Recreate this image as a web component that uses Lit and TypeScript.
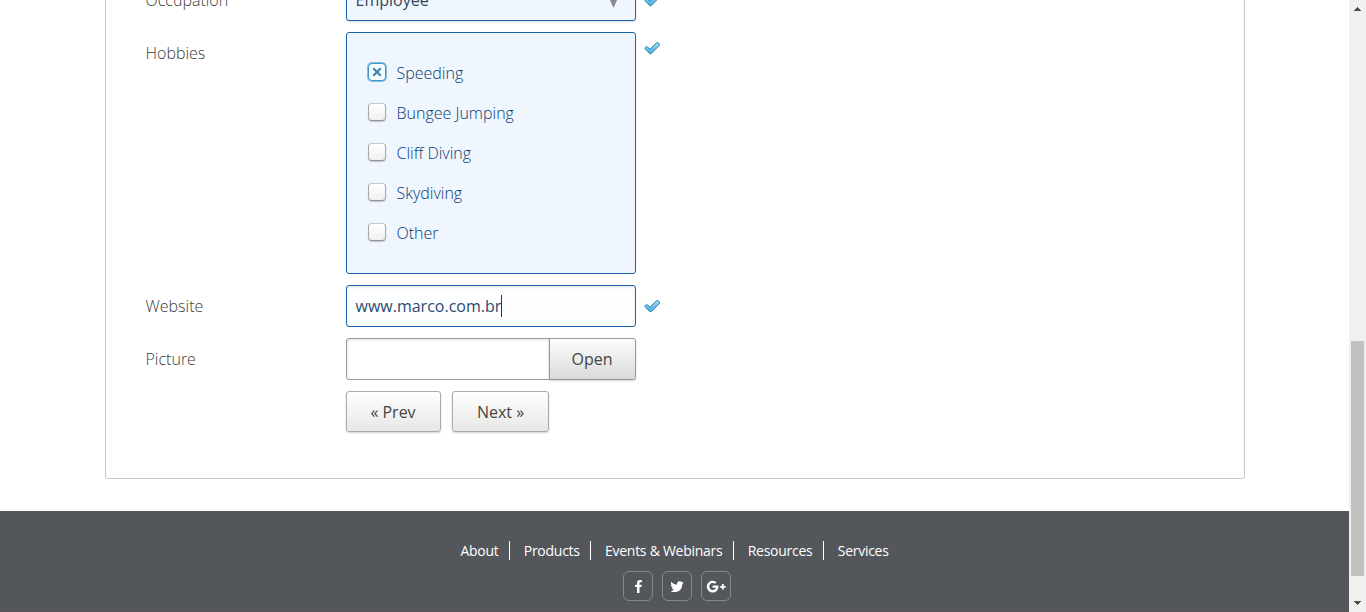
import { LitElement, html, css, svg } from "lit";
import { customElement } from "lit/decorators.js";
import { classMap } from "lit/directives/class-map.js";

@customElement("valid-mark")
class ValidMark extends LitElement {
  static styles = css`
    :host { display: block; width: 16px; height: 13px; }
    svg { display: block; }
  `;
  render() {
    return html`<svg width="16" height="13" viewBox="0 0 16 13">
      <defs>
        <linearGradient id="g" x1="0" y1="0" x2="0" y2="1">
          <stop offset="0" stop-color="#a0d9f5" />
          <stop offset="1" stop-color="#48aee0" />
        </linearGradient>
      </defs>
      <path d="M0.7 6.300 L2.600 4.300 L6 7.200 L12.600 0.600 L14 0.600 L15.400 2 L15.400 3.400 L7.300 11.600 L5.600 11.600 Z"
        fill="url(#g)" stroke="#3184b0" stroke-width="1" stroke-linejoin="round" />
    </svg>`;
  }
}

@customElement("check-item")
class CheckItem extends LitElement {
  static properties = { label: {}, checked: { type: Boolean } };
  declare label: string;
  declare checked: boolean;
  static styles = css`
    :host { display: flex; align-items: center; height: 40px; }
    .box {
      box-sizing: border-box; width: 18px; height: 18px; margin: -2px 10.5px 0 1px;
      border: 1px solid #a6a6a6; border-top-color: #c8c8c8; border-bottom-color: #949494;
      border-radius: 4px; background: linear-gradient(#fff, #f0f0f0);
      box-shadow: 0 1px 1px rgba(0, 0, 0, 0.2);
    }
    .box.on {
      border-color: #3a9acb; background: #f7fbfe;
      box-shadow: 0 0 0 1px rgba(58, 154, 203, 0.6);
    }
    svg { display: block; }
  `;
  render() {
    return html`<span class=${classMap({ box: true, on: this.checked })}>
        ${this.checked
          ? html`<svg width="16" height="16" viewBox="0 0 16 16">
              <path d="M4.300 4.300 L11.700 11.700 M11.700 4.300 L4.300 11.700" stroke="#3d87ad" stroke-width="2.300" />
            </svg>`
          : ""}</span
      ><span>${this.label}</span>`;
  }
}

const HOBBIES = ["Speeding", "Bungee Jumping", "Cliff Diving", "Skydiving", "Other"];
const LINKS = ["About", "Products", "Events & Webinars", "Resources", "Services"];

const FACEBOOK = svg`<path d="M17.6 21.6v-5.8h2l.3-2.3h-2.3v-1.4c0-.7.2-1.1 1.1-1.1h1.3V8.9c-.3 0-1-.1-1.8-.1-1.900 0-3.100 1.100-3.100 3.100v1.600h-2v2.300h2v5.800z" transform="translate(-1.1 .3)" />`;
const TWITTER = svg`<path d="M21.5 11.2c-.5.2-1 .4-1.6.4.6-.3 1-.9 1.2-1.5-.5.3-1.1.5-1.7.7a2.75 2.75 0 0 0-4.7 2.5c-2.300-.1-4.300-1.200-5.700-2.900-.7 1.200-.4 2.800.8 3.700-.4 0-.9-.1-1.200-.3 0 1.300.9 2.500 2.200 2.800-.4.1-.8.1-1.200 0 .3 1.100 1.400 1.900 2.600 1.900-1.200.9-2.600 1.300-4.100 1.100 5.500 3.200 11.900-.3 11.900-6.400v-.5c.6-.4 1.100-.9 1.500-1.500z" transform="translate(.3 .3)" />`;
const GOOGLE = svg`<path d="M12 14.3v2.2h3.300c-.3 1.300-1.300 2.200-3.200 2.200a3.500 3.500 0 1 1 2.300-6.200l1.600-1.600a5.900 5.900 0 1 0 1.900 3.400z" transform="translate(-.4 .3)" /><path d="M20.600 13.100h1.900v1.800h1.800v1.900h-1.800v1.800h-1.900v-1.800h-1.700v-1.900h1.700z" transform="translate(.3 0)" />`;

@customElement("app-root")
class AppRoot extends LitElement {
  static styles = css`
    :host {
      display: flex; height: 612px; overflow: hidden; background: #fff;
      font: 300 16px/22px "Open Sans", "Noto Sans", sans-serif; color: #444;
    }
    .page { flex: 1; display: flex; flex-direction: column; min-width: 0; }
    .panel {
      box-sizing: border-box; width: 1140px; height: 479px; flex: none; margin-left: 105px;
      border: 1px solid #c8c8c8; border-top: 0; border-radius: 0 0 3px 3px;
      padding-left: 40px; overflow: hidden;
    }
    .form { display: flex; flex-direction: column; gap: 11px; margin-top: -21px; }
    .row { display: flex; align-items: flex-start; }
    .label { width: 200px; padding-top: 10px; text-indent: -0.5px; color: #3c3c3c; }
    .field {
      box-sizing: border-box; width: 290px; height: 42px; padding: 0 9px 0 8.5px;
      display: flex; align-items: center; border: 1px solid #1b63ab; border-radius: 3px;
      font-weight: 400; color: #2c4a70;
    }
    .select { background: #eff6fe; color: #35465c; justify-content: space-between; box-shadow: 0 1px 2px rgba(0, 0, 0, 0.15); }
    .select svg { margin: 5px 8.5px 0 0; }
    .group {
      height: 242px; padding: 20px 20px 0; flex-direction: column; align-items: stretch;
      background: #eff6fe; font-weight: 300; color: #083a72;
    }
    .input { background: #fdfeff; box-shadow: inset 0 1px 3px rgba(0, 0, 0, 0.12); }
    .caret { width: 1px; height: 22px; background: #123f70; margin-left: -0.5px; }
    .row valid-mark { margin: 10px 0 0 8px; }
    .row .mid { margin-top: 15px; }
    .file { display: flex; width: 290px; }
    .path {
      box-sizing: border-box; width: 204px; height: 42px; border: 1px solid #999;
      border-radius: 3px 0 0 3px; background: #fff; box-shadow: inset 0 1px 3px rgba(0, 0, 0, 0.12);
    }
    .button {
      box-sizing: border-box; height: 41px; display: flex; align-items: center; justify-content: center;
      border: 1px solid #aaa; border-radius: 3px; background: linear-gradient(#fff, #e7e7e5);
      font-weight: 400; color: #444; box-shadow: 0 1px 2px rgba(0, 0, 0, 0.18);
      padding: 1px 1px 0 0;
    }
    .open { width: 87px; height: 42px; padding-top: 0; margin-left: -1px; border-color: #999; border-radius: 0 3px 3px 0; background: linear-gradient(#fdfdfd, #dadada); }
    .prev { width: 95px; }
    .next { width: 97px; margin-left: 11px; padding-right: 0; }
    .footer {
      box-sizing: border-box; flex: 1; margin-top: 32px; padding-top: 30px; background: #53565b;
      display: flex; flex-direction: column; align-items: center; color: #fff;
      border-bottom: 1px solid #5b5057;
    }
    .links { display: flex; font-size: 14px; line-height: 19px; font-weight: 400; letter-spacing: -0.27px; }
    .link { padding: 0 10.3px 0 14px; border-right: 1px solid #fff; }
    .link:first-child { padding-left: 0; }
    .link:last-child { border: 0; padding-right: 0; }
    .social { display: flex; gap: 9px; margin: 11px 0 0 5px; }
    .social svg { box-sizing: border-box; display: block; border: 1px solid #85878b; border-radius: 6px; fill: #fff; }
    .scroll {
      width: 17px; flex: none; background: #f0f0f0; display: flex; flex-direction: column;
      align-items: center;
    }
    .scroll svg { display: block; flex: none; fill: #505050; }
    .thumb { width: 13px; height: 235px; background: #c1c1c1; margin: 324px 0 auto; }
  `;

  render() {
    return html`
      <div class="page">
        <div class="panel">
          <div class="form">
            <div class="row">
              <span class="label">Occupation</span>
              <div class="field select">
                <span>Employee</span>
                <svg width="9" height="10" viewBox="0 0 9 10"><path d="M0 0h9L4.500 10z" fill="#8c8c8c" /></svg>
              </div>
              <valid-mark class="mid"></valid-mark>
            </div>
            <div class="row">
              <span class="label">Hobbies</span>
              <div class="field group">
                ${HOBBIES.map((h, i) => html`<check-item .label=${h} .checked=${i === 0}></check-item>`)}
              </div>
              <valid-mark></valid-mark>
            </div>
            <div class="row">
              <span class="label">Website</span>
              <div class="field input"><span>www.marco.com.br</span><span class="caret"></span></div>
              <valid-mark class="mid"></valid-mark>
            </div>
            <div class="row">
              <span class="label">Picture</span>
              <div class="file"><div class="path"></div><div class="button open">Open</div></div>
            </div>
            <div class="row">
              <span class="label"></span>
              <div class="button prev">« Prev</div>
              <div class="button next">Next »</div>
            </div>
          </div>
        </div>
        <div class="footer">
          <div class="links">${LINKS.map((l) => html`<span class="link">${l}</span>`)}</div>
          <div class="social">
            ${[FACEBOOK, TWITTER, GOOGLE].map(
              (icon) => html`<svg width="30" height="30" viewBox="1 1 28 28">${icon}</svg>`
            )}
          </div>
        </div>
      </div>
      <div class="scroll">
        <svg width="17" height="17"><path d="M5 11h7v-1h-1V9h-1V8H9V7H8v1H7v1H6v1H5z" /></svg>
        <div class="thumb"></div>
        <svg width="17" height="17"><path d="M5 6h7v1h-1v1h-1v1H9v1H8V9H7V8H6V7H5z" /></svg>
      </div>
    `;
  }
}
